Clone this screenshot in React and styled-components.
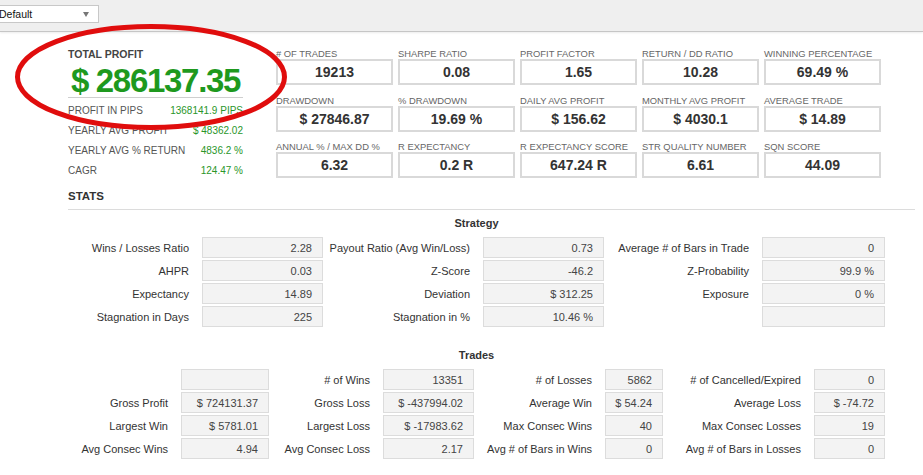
import React from "react";
import styled, { createGlobalStyle } from "styled-components";

const GlobalStyle = createGlobalStyle`
  html, body {
    margin: 0;
    padding: 0;
    background: #fff;
    font-family: "Liberation Sans", Arial, sans-serif;
    color: #333;
  }
`;

const Page = styled.div`
  position: relative;
  width: 923px;
  min-height: 475px;
  overflow: hidden;
`;

const TopBar = styled.div`
  height: 31px;
  background: #efefef;
  border-bottom: 1px solid #c6c6c6;
  box-shadow: 0 1px 2px rgba(0, 0, 0, 0.08);
  display: flex;
  align-items: flex-start;
`;

const Select = styled.div`
  margin: 5px 0 0 -4px;
  width: 103px;
  height: 18px;
  box-sizing: border-box;
  background: #fff;
  border: 1px solid #c8c8c8;
  display: flex;
  align-items: center;
  justify-content: space-between;
  padding: 0 9px 0 2px;
  font-size: 10.5px;
  color: #111;
`;

const Arrow = styled.span`
  width: 0;
  height: 0;
  border-left: 3px solid transparent;
  border-right: 3px solid transparent;
  border-top: 5px solid #777;
`;

const Main = styled.div`
  padding: 16px 8px 0 68px;
`;

const Summary = styled.div`
  display: flex;
  align-items: flex-start;
  gap: 33px;
`;

const ProfitPanel = styled.div`
  width: 175px;
`;

const TotalLabel = styled.div`
  font-size: 10.5px;
  line-height: 12px;
  font-weight: bold;
  color: #444;
`;

const BigValue = styled.div`
  margin-top: 5px;
  font-size: 33px;
  line-height: 32px;
  letter-spacing: -1.3px;
  font-weight: bold;
  color: #1e991e;
  text-align: center;
  border-bottom: 1px solid #cfcfcf;
`;

const InfoRows = styled.div`
  padding-top: 2px;
`;

const InfoRow = styled.div`
  height: 20px;
  display: flex;
  align-items: center;
  justify-content: space-between;
  font-size: 10px;
  color: #555;
`;

const InfoValue = styled.span`
  color: #2a962a;
`;

const MetricGrid = styled.div`
  display: grid;
  grid-template-columns: repeat(5, 117px);
  column-gap: 5px;
  row-gap: 9.5px;
`;

const Metric = styled.div`
  display: flex;
  flex-direction: column;
`;

const MetricLabel = styled.div`
  font-size: 9.4px;
  line-height: 11px;
  color: #666;
  white-space: nowrap;
`;

const MetricBox = styled.div`
  height: 22px;
  border: 2px solid #d9d9d9;
  display: flex;
  align-items: center;
  justify-content: center;
  font-size: 14px;
  font-weight: bold;
  color: #333;
`;

const StatsTitle = styled.div`
  margin-top: 9px;
  font-size: 11.5px;
  line-height: 14px;
  font-weight: bold;
  color: #333;
  padding-bottom: 6px;
  border-bottom: 1px solid #dcdcdc;
`;

const Section = styled.div`
  width: 817px;
  margin-top: ${(p) => p.$top}px;
`;

const SectionTitle = styled.div`
  font-size: 11px;
  line-height: 14px;
  font-weight: bold;
  color: #333;
  text-align: center;
  margin-bottom: 7px;
`;

const Table = styled.div`
  display: grid;
  grid-template-columns: ${(p) => p.$cols};
  row-gap: 2px;
`;

const Label = styled.div`
  height: 21px;
  display: flex;
  align-items: center;
  justify-content: flex-end;
  padding-right: 13px;
  font-size: 11px;
  color: #333;
  white-space: nowrap;
`;

const Value = styled.div`
  height: 19px;
  background: #f3f3f3;
  border: 1px solid #dcdcdc;
  display: flex;
  align-items: center;
  justify-content: flex-end;
  padding-right: 10px;
  font-size: 11px;
  color: #444;
  white-space: nowrap;
`;

const Circle = styled.svg`
  position: absolute;
  left: 13px;
  top: 22px;
  pointer-events: none;
`;

const metrics = [
  ["# OF TRADES", "19213"],
  ["SHARPE RATIO", "0.08"],
  ["PROFIT FACTOR", "1.65"],
  ["RETURN / DD RATIO", "10.28"],
  ["WINNING PERCENTAGE", "69.49 %"],
  ["DRAWDOWN", "$ 27846.87"],
  ["% DRAWDOWN", "19.69 %"],
  ["DAILY AVG PROFIT", "$ 156.62"],
  ["MONTHLY AVG PROFIT", "$ 4030.1"],
  ["AVERAGE TRADE", "$ 14.89"],
  ["ANNUAL % / MAX DD %", "6.32"],
  ["R EXPECTANCY", "0.2 R"],
  ["R EXPECTANCY SCORE", "647.24 R"],
  ["STR QUALITY NUMBER", "6.61"],
  ["SQN SCORE", "44.09"],
];

const info = [
  ["PROFIT IN PIPS", "1368141.9 PIPS"],
  ["YEARLY AVG PROFIT", "$ 48362.02"],
  ["YEARLY AVG % RETURN", "4836.2 %"],
  ["CAGR", "124.47 %"],
];

const strategy = [
  ["Wins / Losses Ratio", "2.28", "Payout Ratio (Avg Win/Loss)", "0.73", "Average # of Bars in Trade", "0"],
  ["AHPR", "0.03", "Z-Score", "-46.2", "Z-Probability", "99.9 %"],
  ["Expectancy", "14.89", "Deviation", "$ 312.25", "Exposure", "0 %"],
  ["Stagnation in Days", "225", "Stagnation in %", "10.46 %", "", ""],
];

const trades = [
  ["", "", "# of Wins", "13351", "# of Losses", "5862", "# of Cancelled/Expired", "0"],
  ["Gross Profit", "$ 724131.37", "Gross Loss", "$ -437994.02", "Average Win", "$ 54.24", "Average Loss", "$ -74.72"],
  ["Largest Win", "$ 5781.01", "Largest Loss", "$ -17983.62", "Max Consec Wins", "40", "Max Consec Losses", "19"],
  ["Avg Consec Wins", "4.94", "Avg Consec Loss", "2.17", "Avg # of Bars in Wins", "0", "Avg # of Bars in Losses", "0"],
];

const renderRows = (rows) =>
  rows.flatMap((row, r) =>
    row.map((cell, c) =>
      c % 2 === 0 ? (
        <Label key={`${r}-${c}`}>{cell}</Label>
      ) : (
        <Value key={`${r}-${c}`}>{cell}</Value>
      )
    )
  );

const App = () => {
  return (
    <Page>
      <GlobalStyle />
      <TopBar>
        <Select>
          <span>Default</span>
          <Arrow />
        </Select>
      </TopBar>
      <Main>
        <Summary>
          <ProfitPanel>
            <TotalLabel>TOTAL PROFIT</TotalLabel>
            <BigValue>$ 286137.35</BigValue>
            <InfoRows>
              {info.map(([label, value]) => (
                <InfoRow key={label}>
                  <span>{label}</span>
                  <InfoValue>{value}</InfoValue>
                </InfoRow>
              ))}
            </InfoRows>
          </ProfitPanel>
          <MetricGrid>
            {metrics.map(([label, value]) => (
              <Metric key={label}>
                <MetricLabel>{label}</MetricLabel>
                <MetricBox>{value}</MetricBox>
              </Metric>
            ))}
          </MetricGrid>
        </Summary>
        <StatsTitle>STATS</StatsTitle>
        <Section $top={6}>
          <SectionTitle>Strategy</SectionTitle>
          <Table $cols="134px 121px 160px 121px 158px 123px">
            {renderRows(strategy)}
          </Table>
        </Section>
        <Section $top={21}>
          <SectionTitle>Trades</SectionTitle>
          <Table $cols="113px 88px 114px 91px 131px 58px 151px 71px">
            {renderRows(trades)}
          </Table>
        </Section>
      </Main>
      <Circle width="280" height="112" viewBox="0 0 280 112">
        <ellipse cx="138" cy="55" rx="133.5" ry="50.5" fill="none" stroke="#e00d0d" strokeWidth="5" />
      </Circle>
    </Page>
  );
};

export default App;
